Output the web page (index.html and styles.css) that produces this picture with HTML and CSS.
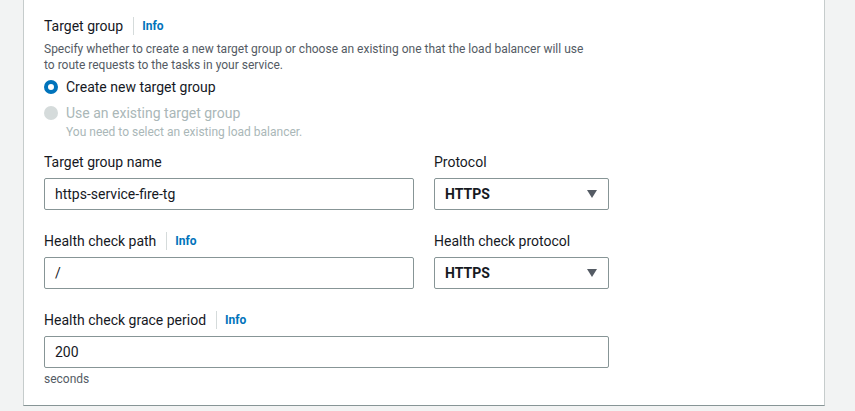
FILE: index.html
```html
<!DOCTYPE html>
<html>
<head>
<meta charset="utf-8">
<link rel="stylesheet" href="styles.css">
</head>
<body>
<div class="page">
  <div class="card">
    <div class="section">
      <div class="label-row">
        <span class="label">Target group</span>
        <span class="sep"></span>
        <a class="info">Info</a>
      </div>
      <p class="desc">Specify whether to create a new target group or choose an existing one that the load balancer will use<br>to route requests to the tasks in your service.</p>
      <div class="radios">
        <div class="radio-row">
          <span class="radio checked"></span>
          <span class="radio-label">Create new target group</span>
        </div>
        <div class="radio-row disabled">
          <span class="radio"></span>
          <span class="radio-label">Use an existing target group</span>
        </div>
        <div class="radio-hint">You need to select an existing load balancer.</div>
      </div>
    </div>

    <div class="grid">
      <div class="field">
        <div class="label-row"><span class="label">Target group name</span></div>
        <div class="input wide">https-service-fire-tg</div>
      </div>
      <div class="field">
        <div class="label-row"><span class="label">Protocol</span></div>
        <div class="select">HTTPS<span class="caret"></span></div>
      </div>
      <div class="field">
        <div class="label-row"><span class="label">Health check path</span><span class="sep"></span><a class="info">Info</a></div>
        <div class="input wide">/</div>
      </div>
      <div class="field">
        <div class="label-row"><span class="label">Health check protocol</span></div>
        <div class="select">HTTPS<span class="caret"></span></div>
      </div>
    </div>

    <div class="field last">
      <div class="label-row"><span class="label">Health check grace period</span><span class="sep"></span><a class="info">Info</a></div>
      <div class="input full">200</div>
      <div class="hint">seconds</div>
    </div>
  </div>
</div>
</body>
</html>
```

FILE: styles.css
```css
* { box-sizing: border-box; }
html, body { margin: 0; padding: 0; }
body {
  background: #f2f3f3;
  font-family: Roboto, "Liberation Sans", Arial, sans-serif;
  color: #16191f;
  width: 855px;
  height: 411px;
  overflow: hidden;
}
.page {
  padding: 0 31px 0 23px;
}
.card {
  background: #fff;
  width: 802px;
  height: 407px;
  margin-top: -1px;
  border-left: 1px solid #c6cccc;
  border-right: 1px solid #c6cccc;
  border-bottom: 1px solid #879596;
  padding: 16px 20px 0 20px;
}
.label-row {
  display: flex;
  align-items: center;
  height: 22px;
}
.label {
  font-size: 14px;
  line-height: 22px;
  color: #16191f;
}
.sep {
  width: 1px;
  height: 18px;
  background: #d5dbdb;
  margin: 0 8px 0 10px;
}
.info {
  font-size: 12px;
  font-weight: 700;
  color: #0073bb;
  line-height: 22px;
}
.desc {
  margin: 4px 0 0 0;
  font-size: 12px;
  line-height: 16px;
  color: #545b64;
}
.radios { margin-top: 3px; }
.radio-row {
  display: flex;
  align-items: center;
  height: 22px;
  margin-bottom: 4px;
}
.radio {
  width: 14px;
  height: 14px;
  border-radius: 50%;
  background: #d5dbdb;
  margin: 0 8px 0 0;
}
.radio.checked {
  background: #fff;
  border: 4px solid #0073bb;
}
.radio-label {
  font-size: 14px;
  color: #16191f;
}
.disabled .radio-label { color: #aab7b8; }
.radio-hint {
  font-size: 12px;
  line-height: 16px;
  color: #aab7b8;
  margin: -4px 0 0 22px;
}
.grid {
  display: grid;
  grid-template-columns: 370px 175px;
  column-gap: 20px;
  row-gap: 20px;
  margin-top: 11px;
}
.field .label-row { margin-bottom: 5px; }
.input, .select {
  height: 32px;
  border: 1px solid #879596;
  border-radius: 2px;
  font-size: 14px;
  display: flex;
  align-items: center;
  padding: 0 10px;
  color: #16191f;
}
.select {
  font-weight: 700;
  justify-content: space-between;
  padding-right: 11px;
}
.caret {
  width: 0;
  height: 0;
  border-left: 5px solid transparent;
  border-right: 5px solid transparent;
  border-top: 8px solid #545b64;
}
.field.last { margin-top: 20px; }
.input.full { width: 565px; }
.hint {
  font-size: 12px;
  line-height: 16px;
  color: #545b64;
  margin-top: 3px;
}
```
